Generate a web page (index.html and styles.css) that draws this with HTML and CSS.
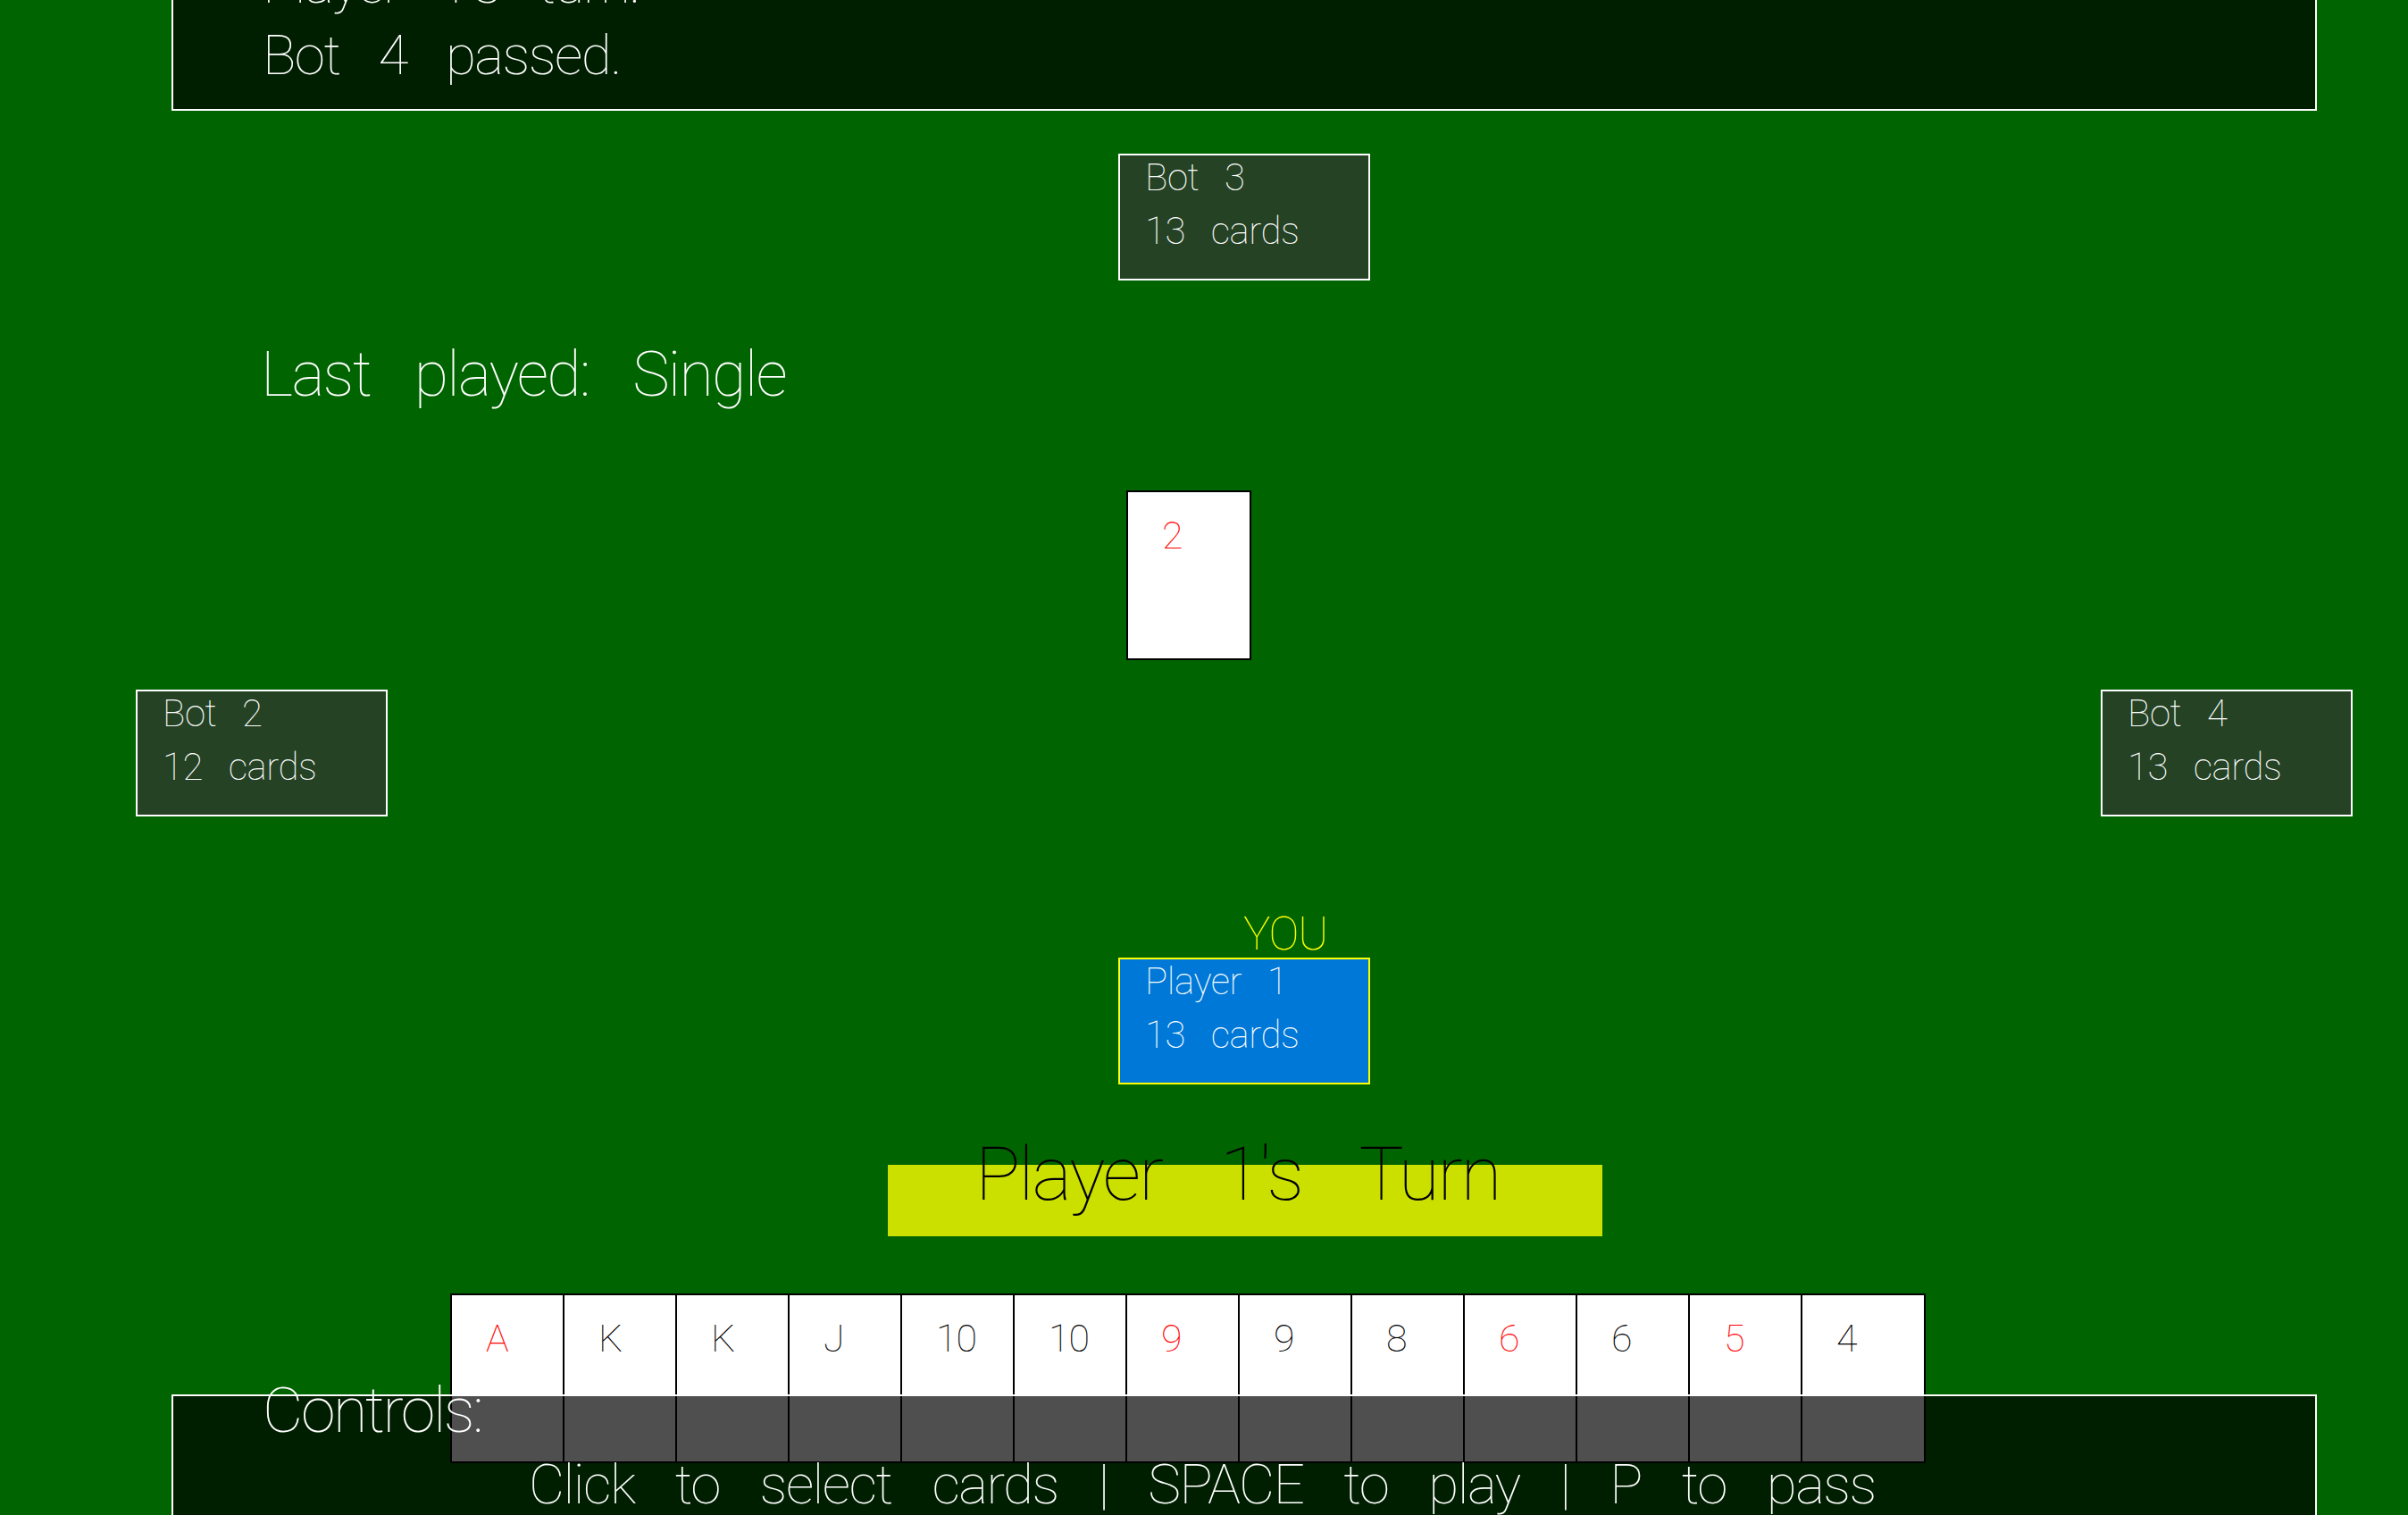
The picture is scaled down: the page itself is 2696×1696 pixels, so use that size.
FILE: index.html
```html
<!DOCTYPE html>
<html lang="en">
<head>
<meta charset="utf-8">
<title>Big Two</title>
<link rel="stylesheet" href="styles.css">
</head>
<body>
<div class="table">
  <div class="log">
    <div class="log-line">Player 1's turn.</div>
    <div class="log-line">Bot 4 passed.</div>
  </div>

  <div class="seat-top">
    <div class="plate">
      <div class="plate-lines">
        <div>Bot 3</div>
        <div>13 cards</div>
      </div>
    </div>
  </div>

  <div class="last-played">Last played: Single</div>

  <div class="pile">
    <div class="card"><span class="rank red">2</span></div>
  </div>

  <div class="side-row">
    <div class="plate">
      <div class="plate-lines">
        <div>Bot 2</div>
        <div>12 cards</div>
      </div>
    </div>
    <div class="plate">
      <div class="plate-lines">
        <div>Bot 4</div>
        <div>13 cards</div>
      </div>
    </div>
  </div>

  <div class="seat-you">
    <div class="you">YOU</div>
    <div class="plate plate-you">
      <div class="plate-lines">
        <div>Player 1</div>
        <div>13 cards</div>
      </div>
    </div>
  </div>

  <div class="turn-banner"><span class="turn-text">Player 1's Turn</span></div>

  <div class="hand">
    <div class="card"><span class="rank red">A</span></div>
    <div class="card"><span class="rank">K</span></div>
    <div class="card"><span class="rank">K</span></div>
    <div class="card"><span class="rank">J</span></div>
    <div class="card"><span class="rank">10</span></div>
    <div class="card"><span class="rank">10</span></div>
    <div class="card"><span class="rank red">9</span></div>
    <div class="card"><span class="rank">9</span></div>
    <div class="card"><span class="rank">8</span></div>
    <div class="card"><span class="rank red">6</span></div>
    <div class="card"><span class="rank">6</span></div>
    <div class="card"><span class="rank red">5</span></div>
    <div class="card"><span class="rank">4</span></div>
  </div>

  <div class="controls">
    <div class="controls-title">Controls:</div>
    <div class="controls-keys">Click to select cards | SPACE to play | P to pass</div>
  </div>
</div>
</body>
</html>
```

FILE: styles.css
```css
html, body {
  margin: 0;
  padding: 0;
  background: #006400;
}

.table {
  position: relative;
  width: 2696px;
  height: 1696px;
  overflow: hidden;
  background: #006400;
  color: #ffffff;
  font-family: "Roboto", "Liberation Sans", sans-serif;
  font-weight: 100;
}

/* shared stroke-font spacing, computed per text size */
.log-line,
.plate-lines,
.last-played,
.rank,
.you,
.turn-text,
.controls-title,
.controls-keys {
  letter-spacing: -0.025em;
  word-spacing: 0.48em;
  white-space: nowrap;
}

/* ---------- log panel ---------- */
.log {
  box-sizing: border-box;
  width: 2402px;
  margin: -60px 0 0 192px;
  padding: 0 0 20px 100px;
  border: 2px solid #ffffff;
  background: rgba(0, 0, 0, 0.69);
}

.log-line {
  font-size: 62px;
  line-height: 80px;
}

/* ---------- player plates ---------- */
.plate {
  box-sizing: border-box;
  width: 282px;
  height: 142px;
  padding-left: 28px;
  border: 2px solid #ffffff;
  background: #254225;
  font-size: 42px;
  line-height: 60px;
}

.plate-lines {
  margin-top: -5px;
  word-spacing: 0.45em;
  letter-spacing: -0.01em;
}

.seat-top {
  margin: 48px 0 0 1252px;
}

.plate-you {
  border-color: #ffff00;
  background: #0078d7;
}

/* ---------- last played ---------- */
.last-played {
  margin: 70px 0 0 292px;
  font-size: 70px;
  line-height: 70px;
}

/* ---------- cards ---------- */
.pile {
  margin: 95px 0 0 1261px;
}

.card {
  box-sizing: border-box;
  flex: none;
  width: 140px;
  height: 190px;
  padding: 27px 0 0 38px;
  border: 2px solid #000000;
  background: #ffffff;
  color: #000000;
  font-size: 43px;
  line-height: 43px;
}

.rank.red {
  color: #ff0000;
}

/* ---------- side seats ---------- */
.side-row {
  display: flex;
  justify-content: space-between;
  width: 2482px;
  margin: 33px 0 0 152px;
}

/* ---------- you ---------- */
.seat-you {
  margin: 106px 0 0 1252px;
}

.you {
  padding-left: 140px;
  color: #ffff00;
  font-size: 51px;
  line-height: 52px;
}

/* ---------- turn banner ---------- */
.turn-banner {
  box-sizing: border-box;
  width: 800px;
  height: 80px;
  margin: 90px 0 0 994px;
  padding-left: 98px;
  background: rgba(255, 255, 0, 0.8);
}

.turn-text {
  display: block;
  color: #000000;
  font-size: 84px;
  line-height: 22px;
  word-spacing: 0.56em;
}

/* ---------- hand ---------- */
.hand {
  display: flex;
  margin: 64px 0 0 504px;
}

.hand .card + .card {
  margin-left: -14px;
}

/* ---------- controls overlay ---------- */
.controls {
  position: absolute;
  left: 192px;
  top: 1561px;
  box-sizing: border-box;
  width: 2402px;
  height: 220px;
  border: 2px solid #ffffff;
  background: rgba(0, 0, 0, 0.69);
}

.controls-title {
  margin-top: -24px;
  padding-left: 100px;
  font-size: 70px;
  line-height: 80px;
  letter-spacing: -0.035em;
}

.controls-keys {
  margin-top: 3px;
  padding-left: 398px;
  font-size: 62px;
  line-height: 80px;
  word-spacing: 0.51em;
}
```
